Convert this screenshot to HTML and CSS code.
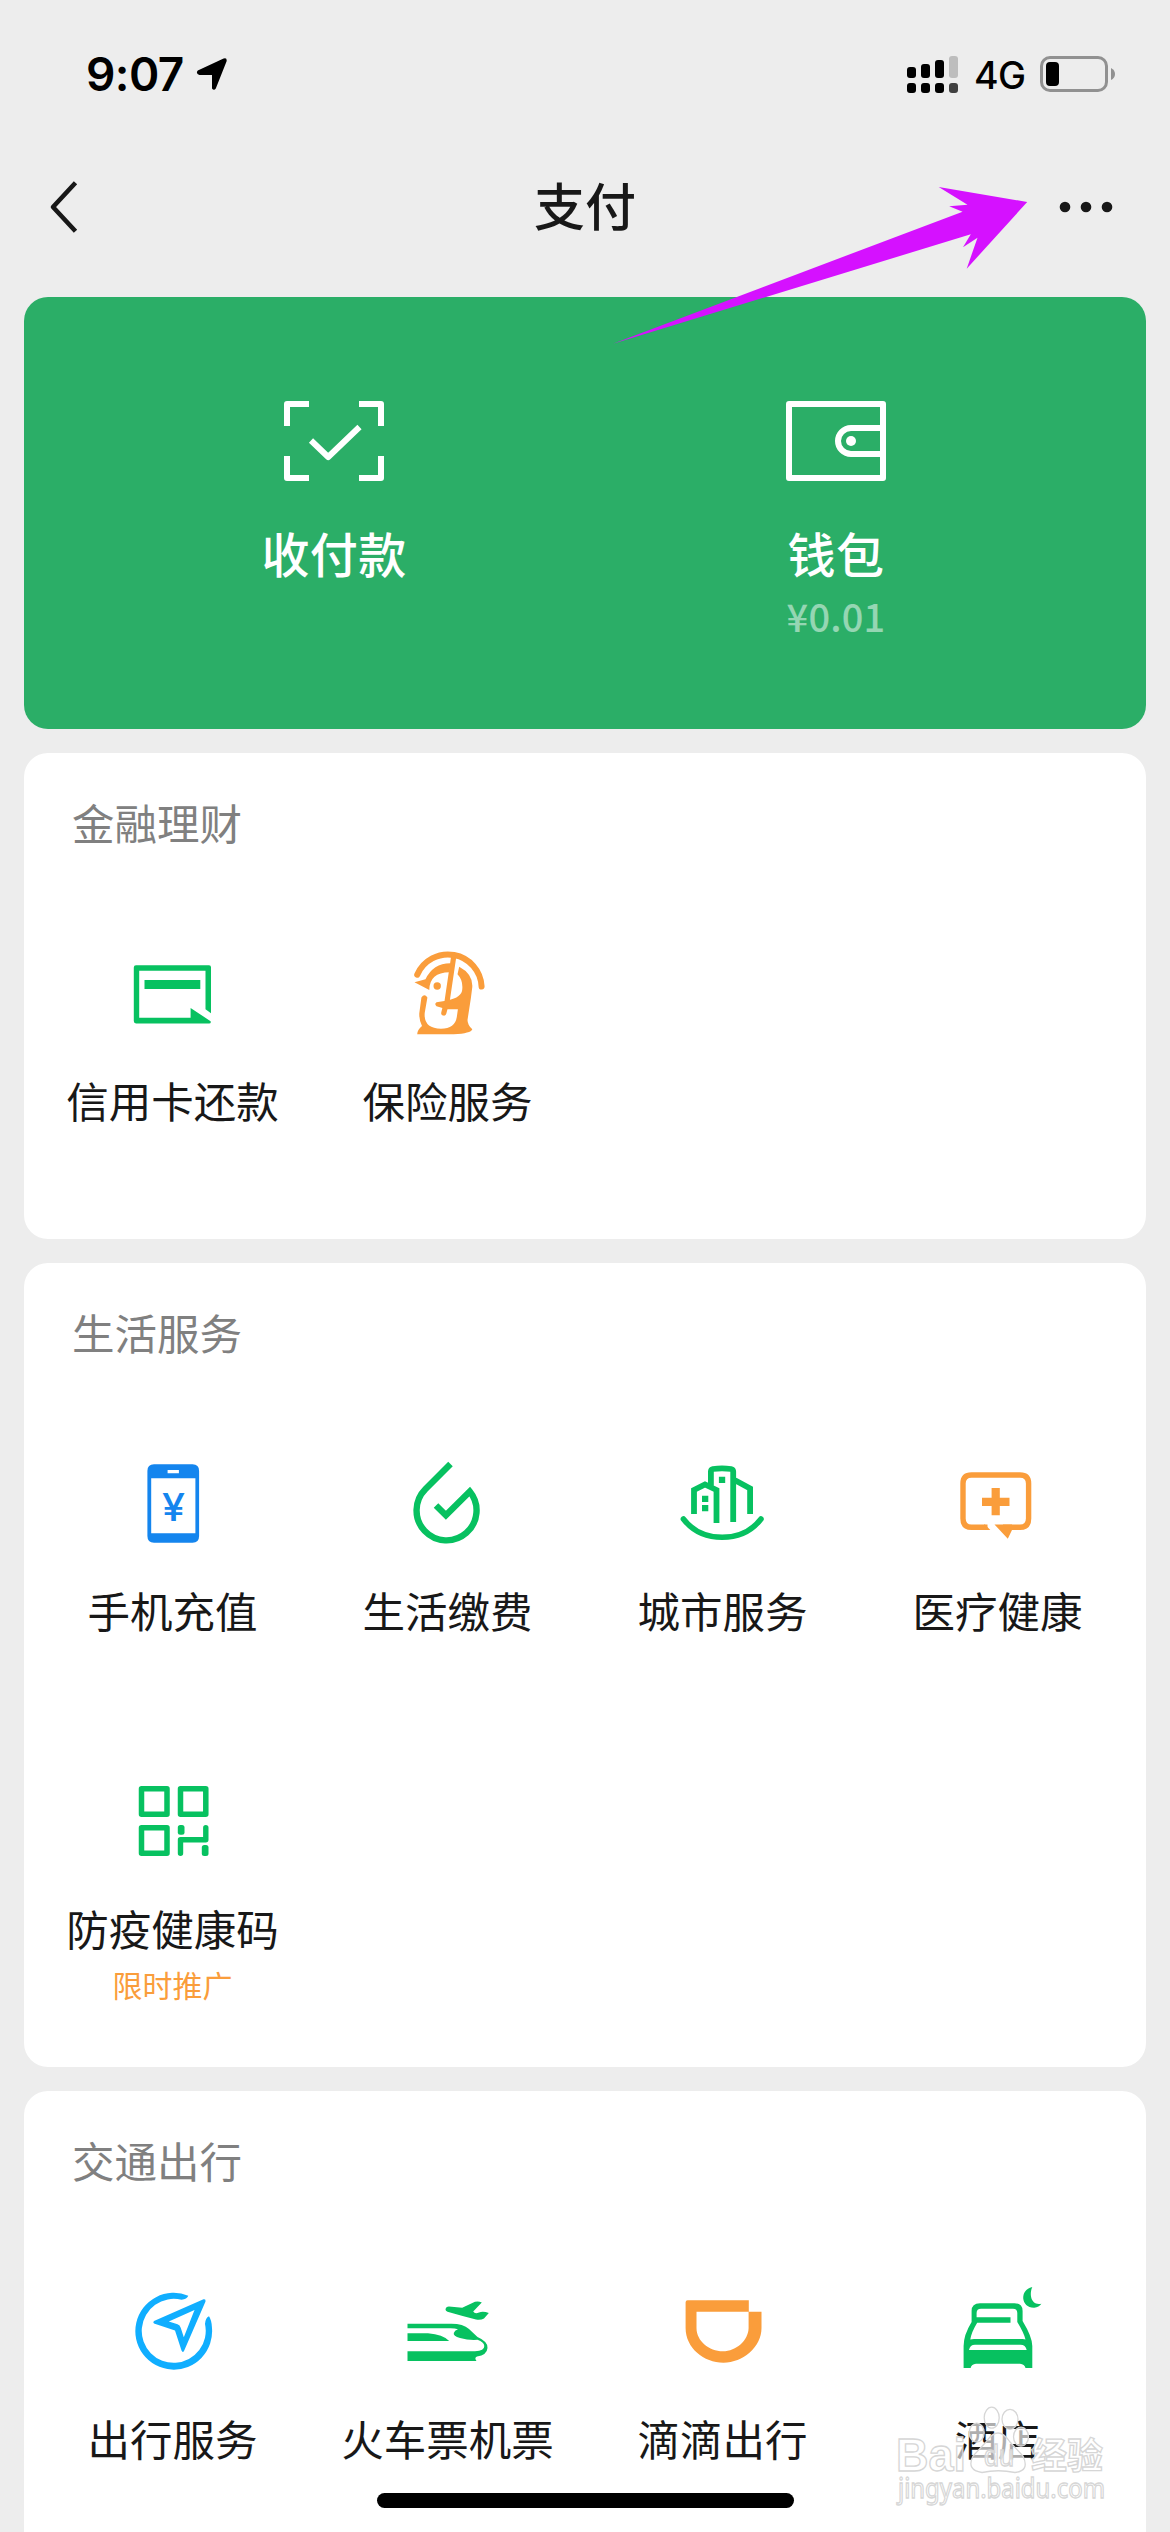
FILE: index.html
```html
<!DOCTYPE html>
<html lang="zh-CN">
<head>
<meta charset="utf-8">
<title>支付</title>
<link rel="stylesheet" href="styles.css">
</head>
<body>
<div class="screen">
  <header class="status">
    <div class="status-left">
      <span class="time">9:07</span>
      <svg class="location" width="32" height="34" viewBox="0 0 32 34"><path d="M27.600 1.600Q31.200.4 30.600 4.200L19.800 31.400Q18 34 16 31.400V18H3.400Q-.6 16.400 1.800 13.400Z"/></svg>
    </div>
    <div class="status-right">
      <svg class="signal" width="52" height="38" viewBox="0 0 52 38">
        <rect x="0" y="11" width="9" height="11" rx="3"/><rect x="14" y="8" width="9" height="14" rx="3"/><rect x="28" y="4" width="9" height="18" rx="3"/><rect x="42" y="0" width="9" height="22" rx="3" fill="#bdbdbd"/>
        <rect x="0" y="27" width="9" height="10" rx="3"/><rect x="14" y="27" width="9" height="10" rx="3"/><rect x="28" y="27" width="9" height="10" rx="3"/><rect x="42" y="27" width="9" height="10" rx="3" fill="#404040"/>
      </svg>
      <span class="network">4G</span>
      <svg class="battery" width="76" height="36" viewBox="0 0 76 36">
        <rect x="1.500" y="1.500" width="65" height="33" rx="8.500" fill="none" stroke="#919191" stroke-width="3"/>
        <rect x="6" y="6" width="13" height="24" rx="4"/>
        <path d="M71 12Q75 14 75 18T71 24Z" fill="#919191"/>
      </svg>
    </div>
  </header>

  <nav class="nav">
    <svg width="30" height="52" viewBox="0 0 30 52"><path d="M26.500 1.800 4 26l22.500 24.200" fill="none" stroke="#181818" stroke-width="4.600" stroke-linejoin="round"/></svg>
    <h1 class="title">支付</h1>
    <svg width="54" height="12" viewBox="0 0 54 12" fill="#181818"><circle cx="6" cy="6" r="5.300"/><circle cx="27" cy="6" r="5.300"/><circle cx="48" cy="6" r="5.300"/></svg>
  </nav>

  <main class="content">
    <section class="hero">
      <div class="hero-item">
        <svg width="100" height="80" viewBox="0 0 100 80" fill="none" stroke="#fff" stroke-width="6" stroke-linejoin="round">
          <path d="M25 3H3v22M75 3h22v22M3 55v22h22M97 55v22H75M27 39.500l17.200 16.500L75.500 26"/>
        </svg>
        <span class="hero-label">收付款</span>
      </div>
      <div class="hero-item">
        <svg width="100" height="80" viewBox="0 0 100 80" fill="none" stroke="#fff" stroke-width="6" stroke-linejoin="round">
          <path d="M3 3h94v74H3ZM97 27H65a13 13 0 0 0 0 26h32"/><circle cx="65" cy="40" r="5" fill="#fff" stroke="none"/>
        </svg>
        <span class="hero-label">钱包</span>
        <span class="hero-amount">¥0.01</span>
      </div>
    </section>

    <section class="card">
      <h2 class="card-title">金融理财</h2>
      <div class="grid">
        <div class="item">
          <svg class="icon green" viewBox="0 0 100 100">
            <path d="M13 22.300H86Q88 22.300 88 24.300V70.300L82.500 66.300V27.700H16.200V74.700H67.600V65L87.600 78.200Q88.400 80.400 86 80.400H13Q10.800 80.400 10.800 78V24.500Q10.800 22.300 13 22.300Z"/>
            <path d="M21.500 37h55.800v9H21.500z"/>
          </svg>
          <span class="label">信用卡还款</span>
        </div>
        <div class="item">
          <svg class="icon orange" viewBox="0 0 100 100">
            <path class="line" stroke-width="6" stroke-linecap="round" d="M19.200 31.700A33.600 33.600 0 0 1 83.600 43.500"/>
            <path class="line" stroke-width="5.200" stroke-linecap="round" d="M55.700 13.700 48.800 60.300Q47 64 45.800 70"/>
            <path d="M16.500 39.300 27.500 36.300Q35 20.500 52.300 20.300L51.600 29.300Q31.500 29.500 31.300 47Z"/>
            <circle cx="39.200" cy="43" r="3.700"/>
            <path d="M61.200 23.700Q75 31 74.300 44L72.900 55 69.500 77Q69.500 82 74.300 86.300 73 90.500 55.700 91.300H19.200Q19.200 87 24 83 21 77 21.300 70.300L23.400 54.500Q26.500 50 29.400 54.500L26.700 70Q25.500 85.500 43 85.700 57 85.700 58.800 74L59.900 66.300H48.800L38.500 63.200Q36 61 38.500 59.200L49.500 57.400Q64 54.500 64.300 46 65 37 59.500 31.300Z"/>
          </svg>
          <span class="label">保险服务</span>
        </div>
      </div>
    </section>

    <section class="card">
      <h2 class="card-title">生活服务</h2>
      <div class="grid">
        <div class="item">
          <svg class="icon blue" viewBox="0 0 100 100">
            <path fill-rule="evenodd" d="M31 11.300H69.500Q76.100 11.300 76.100 18V83Q76.100 89.700 69.500 89.700H31Q24.400 89.700 24.400 83V18Q24.400 11.300 31 11.300ZM28.200 25.300V80.300H72.400V25.300ZM44.600 17v3.200h11.300V17Z"/>
            <text class="yen" x="39" y="67.700" textLength="23" lengthAdjust="spacingAndGlyphs">¥</text>
          </svg>
          <span class="label">手机充值</span>
        </div>
        <div class="item">
          <svg class="icon green" viewBox="0 0 100 100">
            <path class="line" stroke-width="6.400" d="M52.500 11 27.300 36.200A30 30 0 1 0 71.800 38.400L47.900 62.300 38 52.400"/>
          </svg>
          <span class="label">生活缴费</span>
        </div>
        <div class="item">
          <svg class="icon green" viewBox="0 0 100 100">
            <path class="line" stroke-width="5.500" stroke-linecap="round" d="M10.400 66C20 78.500 33 84.300 49.200 84.300S78.400 78.500 88 66"/>
            <path class="line" stroke-width="5.800" d="M37.900 33.500V18.500Q37.900 16.500 40 16 49 14.600 58 16 60.200 16.500 60.200 18.500V69M21 61V37L32 31.500 43.500 37V70M62 27.300 77.100 35.500V61"/>
            <path d="M45.900 23.700h6.300V30h-6.300zM29 42.700h6.300V49H29zM29 52h6.300v6.300H29z"/>
          </svg>
          <span class="label">城市服务</span>
        </div>
        <div class="item">
          <svg class="icon orange" viewBox="0 0 100 100">
            <path class="line" stroke-width="5.400" d="M39.500 74.300H23.500Q15 74.300 15 65.500V30.500Q15 22 23.500 22H72Q80.600 22 80.600 30.500V65.500Q80.600 74.300 72 74.300H55"/>
            <path d="M46.500 71.600H64V77L59.800 85.700ZM37 71.600 42.300 77H36V71.600ZM43.600 35h8.200v9.700h9.700V53h-9.700v9.300h-8.200V53H34v-8.300h9.600Z"/>
          </svg>
          <span class="label">医疗健康</span>
        </div>
        <div class="item">
          <svg class="icon green" viewBox="0 0 100 100">
            <path class="line" stroke-width="5.500" stroke-linejoin="round" d="M18.500 17.700h25.500v25.500H18.500zM57.500 17.700h25.300v25.500H57.500zM18.500 56.700h25.500v25.500H18.500z"/>
            <path class="line" stroke-width="5.400" stroke-linecap="round" stroke-linejoin="round" d="M82.800 56.700V68.700H57.500V82.300"/>
            <rect x="54.800" y="54" width="6.700" height="9.700" rx="2.500"/><rect x="78.800" y="74" width="6.700" height="11" rx="2.500"/>
          </svg>
          <span class="label">防疫健康码</span>
          <span class="promo">限时推广</span>
        </div>
      </div>
    </section>

    <section class="card">
      <h2 class="card-title">交通出行</h2>
      <div class="grid">
        <div class="item">
          <svg class="icon sky" viewBox="0 1 100 100">
            <path d="M65.300 15.700A38.400 38.400 0 1 0 88.900 47Q88.500 40 86 36.300 82.400 38 82 44A32 32 0 1 1 58.500 19.800Q64 19 65.300 15.700Z"/>
            <path fill-rule="evenodd" d="M80.500 19.300Q83 18.800 82.500 21.500L61 71Q59.600 73 58.500 70.500L52 50.500 31 43.500Q29.500 42 31 41ZM71.500 30 45.800 41.500 54.500 44.300Q57 45 57.800 48L60.800 57.300Z"/>
          </svg>
          <span class="label">出行服务</span>
        </div>
        <div class="item">
          <svg class="icon green" viewBox="0 1 100 100">
            <path d="M47.500 29.500Q47.800 26.600 51 26.500L64.200 27.700 77 21.800Q80.500 20.800 83.800 22.500L75.200 31.500Q77 34.500 81 32.500 85 30.800 90.800 33L86 38.500Q83 40.200 78 39.500 62 35.500 49.500 31.800Q47.500 31 47.500 29.500Z"/>
            <path d="M9.500 43.700H52.500Q65 43.500 71 49L79.500 57Q90 61.500 89.500 68 89 75 79 76.500 76 77.500 78.500 81H9.500V71.300H77Q86.500 71 86.300 66 86 62 79.500 59.800 71 60.500 62 58 55 56 55.800 53 56.500 50.500 60 49.200 57 48.300 52.500 48.300H9.500Z"/>
            <path d="M9.500 53.300H30Q45 54.500 51.200 61H9.500Z"/>
          </svg>
          <span class="label">火车票机票</span>
        </div>
        <div class="item">
          <svg class="icon orange" viewBox="0 1 100 100">
            <path d="M14.600 20.300H75.800V31.700H23.500V48C23.500 61 36 71.300 49.800 71.300S75.400 60 75.600 48V31.700H88.500V48C88.500 67 70 82.700 50.400 82.700S12.600 68 12.600 48V22.300Q12.600 20.300 14.600 20.300Z"/>
          </svg>
          <span class="label">滴滴出行</span>
        </div>
        <div class="item">
          <svg class="icon green" viewBox="0 1 100 100">
            <path d="M84.300 7C71 10 73 28 86.200 27.700Q91 27.300 93.400 23.700C83 26 81 14 84.300 7Z"/>
            <path fill-rule="evenodd" d="M32 23.300H66.500Q74.600 23.300 74.600 31V41Q84.300 57 84.300 66V88H77.500Q76.500 84 72 83.700H28Q23.500 84 22.600 88H15.600V66Q15.600 55 23.600 42V31Q23.600 23.300 32 23.300ZM33 28.700Q28.600 28.700 28.600 33V37.200H62.500V42.700H29.200Q23.500 52 22.300 59.400Q24 59 26 59H74.500Q76.500 59 77.500 59.600 76 53 69.300 42V33Q69.300 28.700 65 28.700ZM21 70H78.700Q77.500 64.800 72.500 64.700H27Q22 64.800 21 70Z"/>
          </svg>
          <span class="label">酒店</span>
        </div>
      </div>
    </section>
  </main>

  <svg class="pointer" width="416" height="160" viewBox="0 0 416 160"><path d="M0 158.700 349.600 26.700 336.200 21.300 354.500 19.700 325.700 2 414.200 17 353.700 83.700 364.500 52.700 350 62.300 357.800 49.300Z" fill="#d511ff"/></svg>

  <svg class="watermark" width="225" height="125" viewBox="0 0 225 125">
    <g fill="#fff" fill-opacity=".65" stroke="#d6d6d6" stroke-width="1.300">
      <ellipse cx="101.700" cy="18.700" rx="7.500" ry="10.500"/><ellipse cx="120" cy="20.300" rx="8" ry="10"/>
      <ellipse cx="86.700" cy="33.700" rx="7.500" ry="9.500"/><ellipse cx="131" cy="37.700" rx="7.500" ry="9.500"/>
      <path d="M96 43Q108 25 120 43L133 57Q140 72 125 73.500 108 70 92 73.500 76 71 83 57Z"/>
      <text class="wm-brand" x="6" y="72" textLength="70" lengthAdjust="spacingAndGlyphs">Bai</text>
      <text class="wm-du" x="94" y="67" textLength="30" lengthAdjust="spacingAndGlyphs">du</text>
      <text class="wm-cn" x="141" y="69.500">经验</text>
      <text class="wm-url" x="8" y="98.500" textLength="207" lengthAdjust="spacingAndGlyphs">jingyan.baidu.com</text>
    </g>
  </svg>
  <div class="home-indicator"></div>
</div>
</body>
</html>
```
FILE: styles.css
```css
* { box-sizing: border-box; }

body {
  margin: 0;
  background: #ededed;
  font-family: "Noto Sans CJK SC", sans-serif;
  color: #181818;
}

.screen {
  position: relative;
  width: 1170px;
  height: 2532px;
  overflow: hidden;
}

svg { display: block; flex: none; }

.status {
  height: 141px;
  padding: 0 54px 0 86px;
  display: flex;
  justify-content: space-between;
  align-items: flex-start;
  color: #000;
  font-family: Inter, "Liberation Sans", sans-serif;
}

.status-left, .status-right { display: flex; align-items: flex-start; }
.time { width: 110px; margin-top: 44px; font-size: 46px; line-height: 60px; font-weight: 600; letter-spacing: -.6px; }
.location { margin-top: 57px; }
.signal { margin-top: 56px; }
.network { width: 81px; padding-left: 15px; margin-top: 51px; font-size: 37.500px; line-height: 50px; font-weight: 500; letter-spacing: -.5px; }
.battery { margin-top: 56px; }

.nav {
  height: 132px;
  padding: 0 57px 0 49px;
  display: grid;
  grid-template-columns: 62px 1fr 54px;
  align-items: center;
}

.title {
  margin: 0 0 6px;
  font-size: 51px;
  line-height: 72px;
  font-weight: 500;
  text-align: center;
}

.content {
  padding: 24px 24px 0;
  display: flex;
  flex-direction: column;
  gap: 24px;
}

.hero {
  height: 432px;
  padding: 104px 59px 0;
  display: flex;
  border-radius: 24px;
  background: #2bae67;
  color: #fff;
}

.hero-item { flex: 1; display: flex; flex-direction: column; align-items: center; }
.hero-label { margin-top: 41px; font-size: 48px; line-height: 60px; font-weight: 500; letter-spacing: .4px; }
.hero-amount { margin-top: 9px; font-size: 38px; line-height: 50px; font-weight: 500; letter-spacing: .2px; color: rgba(255, 255, 255, .5); }

.card {
  padding: 38px 11px 0;
  border-radius: 24px;
  background: #fff;
}

.card-title {
  margin: 1px 0 69px 37px;
  font-size: 42.500px;
  line-height: 60px;
  font-weight: 400;
  color: #808080;
}

.grid { display: grid; grid-template-columns: repeat(4, 275px); grid-auto-rows: 318px; }
.item { padding-top: 22px; display: flex; flex-direction: column; align-items: center; }
.icon { width: 100px; height: 100px; fill: currentColor; }
.line { fill: none; stroke: currentColor; }
.green { color: #07c160; }
.orange { color: #fa9d3b; }
.blue { color: #1485ee; }
.sky { color: #10aeff; }
.yen { font: 500 37.500px Inter, sans-serif; }
.label { margin-top: 27px; font-size: 42.500px; line-height: 60px; white-space: nowrap; }
.promo { margin-top: 5px; font-size: 30px; line-height: 42px; color: #fa9d3b; }

.pointer { position: absolute; left: 613px; top: 185px; }
.watermark { position: absolute; left: 890px; top: 2399px; }
.wm-brand { font: 700 46px "Liberation Sans", sans-serif; }
.wm-du { font: 400 29px "Liberation Sans", sans-serif; }
.wm-cn { font: 700 36px "Noto Sans CJK SC", sans-serif; }
.wm-url { font: 400 27px "Noto Sans", sans-serif; }

.home-indicator {
  position: absolute;
  left: 377px;
  top: 2493px;
  width: 417px;
  height: 15px;
  border-radius: 8px;
  background: #000;
}
```
